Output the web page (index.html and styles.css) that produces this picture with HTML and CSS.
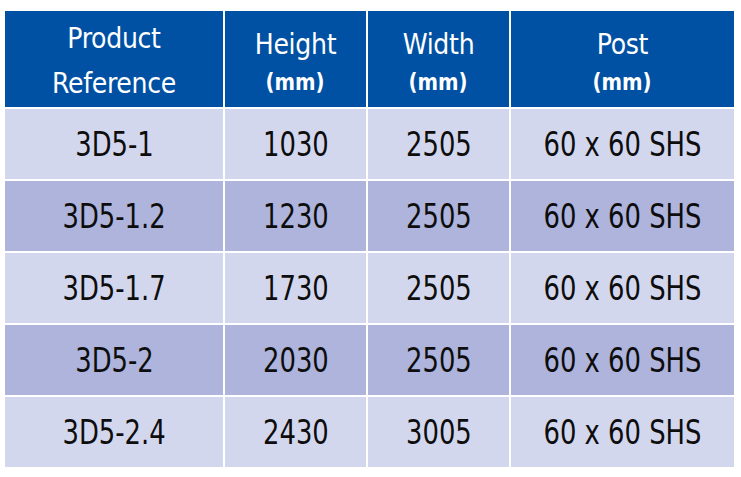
FILE: index.html
```html
<!DOCTYPE html>
<html>
<head>
<meta charset="utf-8">
<link rel="stylesheet" href="styles.css">
</head>
<body>
<div class="spec-table">
  <div class="cell head"><div class="h-title two-line">Product<br>Reference</div></div>
  <div class="cell head"><div class="h-title">Height</div><div class="h-unit">(mm)</div></div>
  <div class="cell head"><div class="h-title">Width</div><div class="h-unit">(mm)</div></div>
  <div class="cell head"><div class="h-title">Post</div><div class="h-unit">(mm)</div></div>

  <div class="cell light"><span class="v">3D5-1</span></div>
  <div class="cell light"><span class="v">1030</span></div>
  <div class="cell light"><span class="v">2505</span></div>
  <div class="cell light"><span class="v">60 x 60 SHS</span></div>

  <div class="cell dark"><span class="v">3D5-1.2</span></div>
  <div class="cell dark"><span class="v">1230</span></div>
  <div class="cell dark"><span class="v">2505</span></div>
  <div class="cell dark"><span class="v">60 x 60 SHS</span></div>

  <div class="cell light"><span class="v">3D5-1.7</span></div>
  <div class="cell light"><span class="v">1730</span></div>
  <div class="cell light"><span class="v">2505</span></div>
  <div class="cell light"><span class="v">60 x 60 SHS</span></div>

  <div class="cell dark"><span class="v">3D5-2</span></div>
  <div class="cell dark"><span class="v">2030</span></div>
  <div class="cell dark"><span class="v">2505</span></div>
  <div class="cell dark"><span class="v">60 x 60 SHS</span></div>

  <div class="cell light"><span class="v">3D5-2.4</span></div>
  <div class="cell light"><span class="v">2430</span></div>
  <div class="cell light"><span class="v">3005</span></div>
  <div class="cell light"><span class="v">60 x 60 SHS</span></div>
</div>
</body>
</html>
```
FILE: styles.css
```css
html, body {
  margin: 0;
  padding: 0;
  background: #ffffff;
}
body {
  font-family: "DejaVu Sans Condensed", "DejaVu Sans", sans-serif;
  font-stretch: condensed;
}
.spec-table {
  margin: 11px 0 0 5px;
  width: 729px;
  display: grid;
  grid-template-columns: 218px 141px 141px 223px;
  grid-template-rows: 96px repeat(5, 70px);
  gap: 2px;
}
.cell {
  display: flex;
  flex-direction: column;
  align-items: center;
  justify-content: center;
  text-align: center;
  color: #0d0d0d;
}
.v {
  display: inline-block;
  font-size: 34px;
  line-height: 40px;
  white-space: nowrap;
  transform: scaleX(0.845);
}
.head {
  background: #0051a3;
  color: #ffffff;
}
.light { background: #d3d7ee; }
.dark { background: #aeb4dc; }
.h-title {
  font-size: 28px;
  line-height: 44px;
  letter-spacing: -0.3px;
}
.two-line {
  line-height: 45px;
  padding-top: 4px;
}
.h-unit {
  font-size: 23px;
  font-weight: bold;
  line-height: 26px;
  margin-top: 2px;
  transform: scaleX(0.95);
}
```
